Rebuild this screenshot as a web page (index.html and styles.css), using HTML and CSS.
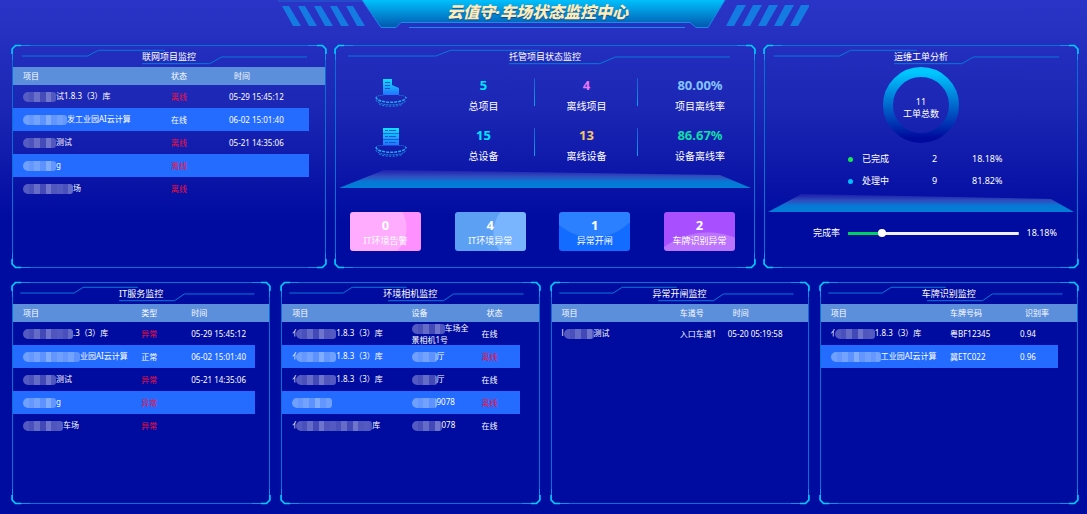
FILE: index.html
```html
<!DOCTYPE html>
<html lang="zh-CN">
<head>
  <meta charset="UTF-8">
  <meta name="viewport" content="width=device-width, initial-scale=1.0">
  <title>云值守·车场状态监控中心</title>
  <link rel="stylesheet" href="styles.css">
</head>
<body>
  <!-- shared shapes -->
  <svg class="defs" aria-hidden="true">
    <defs>
      <linearGradient id="banner-fill" x1="0" y1="0" x2="0" y2="1">
        <stop offset="0" stop-color="#00c0fc"/>
        <stop offset="1" stop-color="#0358b0"/>
      </linearGradient>
      <linearGradient id="platform-fill" x1="0" y1="0" x2="0" y2="1">
        <stop offset="0" stop-color="#5a50c8" stop-opacity="0.2"/>
        <stop offset="0.35" stop-color="#3f66c8" stop-opacity="0.7"/>
        <stop offset="0.65" stop-color="#0678d6"/>
        <stop offset="1" stop-color="#007fd8"/>
      </linearGradient>
      <linearGradient id="icon-fill" x1="0" y1="0" x2="0" y2="1">
        <stop offset="0" stop-color="#10e0ff"/>
        <stop offset="1" stop-color="#2272ff"/>
      </linearGradient>
      <linearGradient id="ring-fill" x1="0" y1="0" x2="0" y2="1">
        <stop offset="0" stop-color="#00c8ff"/>
        <stop offset="1" stop-color="#000a9c"/>
      </linearGradient>
      <symbol id="title-line" viewBox="0 0 314 22" preserveAspectRatio="none">
        <path d="M9 10.500H75L86 4.500H153M130 18.500H198L210 11.500H296" fill="none" stroke="#0878d8" vector-effect="non-scaling-stroke"/>
      </symbol>
      <symbol id="corner" viewBox="0 0 20 16">
        <path d="M2.500 16V5L6 1.500H20" fill="none" stroke="#0e8ee4"/>
        <path d="M2 10V5L5.500 1.500H11" fill="none" stroke="#00ccff" stroke-width="1.500"/>
      </symbol>
      <symbol id="base" viewBox="0 0 32 12">
        <g fill="none" stroke="#1c8fe8">
          <path d="M1 2C1 9 31 9 31 2" stroke="#22a8ee" stroke-width="1.500" stroke-dasharray="3 1"/>
          <path d="M1 5C2 11.500 30 11.500 31 5" stroke-dasharray="2 1"/>
          <path d="M4 9C8 12 24 12 28 9" stroke-dasharray="2 1.500"/>
          <path d="M1 2Q4 0 8 0.500M31 2Q28 0 24 0.500" stroke-dasharray="1 1"/>
        </g>
      </symbol>
    </defs>
  </svg>

  <header class="header">
    <svg class="banner" viewBox="278 0 531 30" aria-hidden="true">
      <path d="M362 0H725L708 27H696L690 22H401L396 27H381Z" fill="url(#banner-fill)"/>
      <path d="M362 0L381 27.500H396L401 22.500H690L696 27.500H708L725 0M409 27.500H685" fill="none" stroke="#188ce8"/>
      <path d="M278 1H362" stroke="#2060d0"/>
      <g fill="#147be2">
        <path d="M282 6h7l12 20h-8zM298 6h7l12 20h-8zM314 6h7l12 20h-8zM330 6h7l12 20h-8zM346 6h7l12 20h-8z"/>
        <path d="M737 5h9l-12 21h-8zM753 5h9l-12 21h-8zM769 5h9l-12 21h-8zM785 5h9l-12 21h-8zM801 5h9l-12 21h-8z"/>
      </g>
    </svg>
    <h1>云值守·车场状态监控中心</h1>
  </header>

  <main class="main">
    <div class="row row-top">
      <section class="panel">
        <svg class="corner tl"><use href="#corner"/></svg><svg class="corner tr"><use href="#corner"/></svg>
        <svg class="corner bl"><use href="#corner"/></svg><svg class="corner br"><use href="#corner"/></svg>
        <div class="title"><svg class="title-bg"><use href="#title-line"/></svg><h2>联网项目监控</h2></div>
        <table>
          <colgroup><col><col class="c58"><col class="c80"><col class="gutter-m"></colgroup>
          <thead><tr><th>项目</th><th>状态</th><th class="inset">时间</th><th></th></tr></thead>
          <tbody>
            <tr><td><span class="mask w33"></span>试1.8.3（3）库</td><td class="bad">离线</td><td>05-29 15:45:12</td></tr>
            <tr><td><span class="mask w44"></span>发工业园AI云计算</td><td>在线</td><td>06-02 15:01:40</td></tr>
            <tr><td><span class="mask w33"></span>测试</td><td class="bad">离线</td><td>05-21 14:35:06</td></tr>
            <tr><td><span class="mask w33"></span>g</td><td class="bad">离线</td><td></td></tr>
            <tr><td><span class="mask w50"></span>场</td><td class="bad">离线</td><td></td></tr>
          </tbody>
        </table>
      </section>

      <section class="panel">
        <svg class="corner tl"><use href="#corner"/></svg><svg class="corner tr"><use href="#corner"/></svg>
        <svg class="corner bl"><use href="#corner"/></svg><svg class="corner br"><use href="#corner"/></svg>
        <div class="title"><svg class="title-bg"><use href="#title-line"/></svg><h2>托管项目状态监控</h2></div>
        <div class="stats">
          <div class="stat-icon">
            <svg width="32" height="30" viewBox="0 0 32 30">
              <use href="#base" y="17" width="32" height="12"/>
              <path d="M8 1H17V7L24 10V17H8Z" fill="url(#icon-fill)"/>
              <path d="M10 4.500h5M10 7.500h5M10 10.500h5" stroke="#1458c8"/>
            </svg>
          </div>
          <div class="stat line"><strong class="cyan">5</strong><span>总项目</span></div>
          <div class="stat line"><strong class="pink">4</strong><span>离线项目</span></div>
          <div class="stat last"><strong class="sky">80.00%</strong><span>项目离线率</span></div>
          <div class="stat-icon">
            <svg width="32" height="30" viewBox="0 0 32 30">
              <use href="#base" y="17" width="32" height="12"/>
              <path d="M8 0H24V5.500H8ZM8 6H24V11.500H8ZM8 12H24V17.500H8Z" fill="url(#icon-fill)"/>
              <path d="M10 2.500h3M14 2.500h7M10 8.500h3M14 8.500h7M10 14.500h3M14 14.500h7" stroke="#1458d0"/>
            </svg>
          </div>
          <div class="stat line"><strong class="cyan">15</strong><span>总设备</span></div>
          <div class="stat line"><strong class="gold">13</strong><span>离线设备</span></div>
          <div class="stat last"><strong class="green">86.67%</strong><span>设备离线率</span></div>
        </div>
        <svg class="platform" viewBox="0 0 411 18" preserveAspectRatio="none"><path d="M0 18L45 0L380 5L411 18Z" fill="url(#platform-fill)"/></svg>
        <div class="cards">
          <div class="card card-pink"><strong>0</strong><span>IT环境告警</span></div>
          <div class="card card-sky"><strong>4</strong><span>IT环境异常</span></div>
          <div class="card card-blue"><strong>1</strong><span>异常开闸</span></div>
          <div class="card card-purple"><strong>2</strong><span>车牌识别异常</span></div>
        </div>
      </section>

      <section class="panel">
        <svg class="corner tl"><use href="#corner"/></svg><svg class="corner tr"><use href="#corner"/></svg>
        <svg class="corner bl"><use href="#corner"/></svg><svg class="corner br"><use href="#corner"/></svg>
        <div class="title"><svg class="title-bg"><use href="#title-line"/></svg><h2>运维工单分析</h2></div>
        <div class="ring">
          <svg width="76" height="76" viewBox="0 0 76 76"><circle cx="38" cy="38" r="33" fill="none" stroke="url(#ring-fill)" stroke-width="10"/></svg>
          <p>11<br>工单总数</p>
        </div>
        <ul class="legend">
          <li><i class="dot dot-green"></i><span>已完成</span><span>2</span><span>18.18%</span></li>
          <li><i class="dot dot-cyan"></i><span>处理中</span><span>9</span><span>81.82%</span></li>
        </ul>
        <svg class="platform" viewBox="0 0 411 18" preserveAspectRatio="none"><path d="M0 18L45 0L380 5L411 18Z" fill="url(#platform-fill)"/></svg>
        <div class="rate">
          <label for="rate">完成率</label>
          <input type="range" id="rate" min="0" max="100" step="0.01" value="18.18">
          <output for="rate">18.18%</output>
        </div>
      </section>
    </div>

    <div class="row row-bottom">
      <section class="panel">
        <svg class="corner tl"><use href="#corner"/></svg><svg class="corner tr"><use href="#corner"/></svg>
        <svg class="corner bl"><use href="#corner"/></svg><svg class="corner br"><use href="#corner"/></svg>
        <div class="title"><svg class="title-bg"><use href="#title-line"/></svg><h2>IT服务监控</h2></div>
        <table>
          <colgroup><col><col class="c50"><col class="c64"><col class="gutter-s"></colgroup>
          <thead><tr><th>项目</th><th>类型</th><th>时间</th><th></th></tr></thead>
          <tbody>
            <tr><td><span class="mask w50"></span>.3（3）库</td><td class="bad">异常</td><td>05-29 15:45:12</td></tr>
            <tr><td><span class="mask w57"></span>业园AI云计算</td><td>正常</td><td>06-02 15:01:40</td></tr>
            <tr><td><span class="mask w33"></span>测试</td><td class="bad">异常</td><td>05-21 14:35:06</td></tr>
            <tr><td><span class="mask w33"></span>g</td><td class="bad">异常</td><td></td></tr>
            <tr><td><span class="mask w40"></span>车场</td><td class="bad">异常</td><td></td></tr>
          </tbody>
        </table>
      </section>

      <section class="panel">
        <svg class="corner tl"><use href="#corner"/></svg><svg class="corner tr"><use href="#corner"/></svg>
        <svg class="corner bl"><use href="#corner"/></svg><svg class="corner br"><use href="#corner"/></svg>
        <div class="title"><svg class="title-bg"><use href="#title-line"/></svg><h2>环境相机监控</h2></div>
        <table>
          <colgroup><col><col class="c70"><col class="c38"><col class="gutter"></colgroup>
          <thead><tr><th>项目</th><th>设备</th><th class="inset">状态</th><th></th></tr></thead>
          <tbody>
            <tr><td>亻<span class="mask over w40"></span>1.8.3（3）库</td><td class="two-line"><span class="mask w33"></span>车场全<br>景相机1号</td><td>在线</td></tr>
            <tr><td>亻<span class="mask over w40"></span>1.8.3（3）库</td><td><span class="mask w25"></span>厅</td><td class="bad">离线</td></tr>
            <tr><td>亻<span class="mask over w40"></span>1.8.3（3）库</td><td><span class="mask w25"></span>厅</td><td>在线</td></tr>
            <tr><td><span class="mask w40"></span></td><td><span class="mask w25"></span>9078</td><td class="bad">离线</td></tr>
            <tr><td>亻<span class="mask over w76"></span>库</td><td><span class="mask w30"></span>078</td><td>在线</td></tr>
          </tbody>
        </table>
      </section>

      <section class="panel">
        <svg class="corner tl"><use href="#corner"/></svg><svg class="corner tr"><use href="#corner"/></svg>
        <svg class="corner bl"><use href="#corner"/></svg><svg class="corner br"><use href="#corner"/></svg>
        <div class="title"><svg class="title-bg"><use href="#title-line"/></svg><h2>异常开闸监控</h2></div>
        <table>
          <colgroup><col><col class="c48"><col class="c80"></colgroup>
          <thead><tr><th>项目</th><th>车道号</th><th class="inset">时间</th></tr></thead>
          <tbody>
            <tr><td>l<span class="mask w30"></span>测试</td><td>入口车道1</td><td>05-20 05:19:58</td></tr>
          </tbody>
        </table>
      </section>

      <section class="panel">
        <svg class="corner tl"><use href="#corner"/></svg><svg class="corner tr"><use href="#corner"/></svg>
        <svg class="corner bl"><use href="#corner"/></svg><svg class="corner br"><use href="#corner"/></svg>
        <div class="title"><svg class="title-bg"><use href="#title-line"/></svg><h2>车牌识别监控</h2></div>
        <table>
          <colgroup><col><col class="c70"><col class="c38"><col class="gutter"></colgroup>
          <thead><tr><th>项目</th><th>车牌号码</th><th class="inset">识别率</th><th></th></tr></thead>
          <tbody>
            <tr><td>亻<span class="mask over w40"></span>1.8.3（3）库</td><td>粤BF12345</td><td>0.94</td></tr>
            <tr><td><span class="mask w50"></span>工业园AI云计算</td><td>冀ETC022</td><td>0.96</td></tr>
          </tbody>
        </table>
      </section>
    </div>
  </main>
</body>
</html>
```

FILE: styles.css
```css
* {
  box-sizing: border-box;
}

body {
  display: flex;
  flex-direction: column;
  min-height: 100vh;
  margin: 0;
  color: #fff;
  font-family: "Noto Sans", "Noto Sans CJK SC", sans-serif;
  font-size: 9px;
  background: #000ba0 linear-gradient(#2a34c6, #1c26b4 110px, #000ba0 220px) no-repeat;
}

h1, h2, p, ul {
  margin: 0;
  padding: 0;
}

.defs {
  position: absolute;
  width: 0;
  height: 0;
}

.header {
  display: grid;
  justify-items: center;
  height: 45px;
}

.header > * {
  grid-area: 1 / 1;
}

.banner {
  width: 531px;
  height: 30px;
}

.header h1 {
  z-index: 1;
  padding-right: 12px;
  color: #ffecb8;
  font-size: 16px;
  font-weight: 900;
  font-style: italic;
  line-height: 24px;
  text-shadow: 0 1px 1px #0a4a90;
}

.main {
  display: flex;
  flex: 1;
  flex-direction: column;
  gap: 14px;
  padding: 0 9px 10px 12px;
}

.row {
  display: grid;
}

.row-top {
  grid-template-columns: 314fr 420fr 314fr;
  gap: 9px;
}

.row-bottom {
  flex: 1;
  grid-template-columns: repeat(4, 1fr);
  gap: 11px;
}

.panel {
  position: relative;
  min-width: 0;
  border: 1px solid #0670d4;
  border-radius: 5px;
}

.corner {
  position: absolute;
  width: 20px;
  height: 16px;
}

.tl { top: -2px; left: -3px; }
.tr { top: -2px; right: -3px; transform: scaleX(-1); }
.bl { bottom: -2px; left: -3px; transform: scaleY(-1); }
.br { right: -3px; bottom: -2px; transform: scale(-1, -1); }

.title {
  display: grid;
  height: 21px;
}

.title > * {
  grid-area: 1 / 1;
}

.title-bg {
  width: 100%;
  height: 21px;
}

.title h2 {
  font-size: 9px;
  font-weight: 400;
  line-height: 21px;
  text-align: center;
}

/* tables */
table {
  width: 100%;
  border-collapse: collapse;
  table-layout: fixed;
  font-size: 8px;
  line-height: 10px;
}

th {
  height: 18px;
  padding: 0;
  font-weight: 400;
  text-align: left;
  background: #5b8edb;
}

td {
  height: 23px;
  padding: 0;
  white-space: nowrap;
}

th:first-child,
td:first-child {
  padding-left: 10px;
}

th.inset {
  padding-left: 5px;
}

tbody tr:nth-child(even) td {
  background: #246bff;
}

td.bad {
  color: #f0103c;
}

td.two-line {
  line-height: 11px;
}

.c38 { width: 38px; }
.c48 { width: 48px; }
.c50 { width: 50px; }
.c58 { width: 58px; }
.c64 { width: 64px; }
.c70 { width: 70px; }
.c80 { width: 80px; }
.gutter { width: 19px; }
.gutter-m { width: 16px; }
.gutter-s { width: 14px; }

/* hidden part of a name */
.mask {
  display: inline-block;
  height: 10px;
  border-radius: 5px 3px 3px 5px;
  vertical-align: middle;
  background: repeating-linear-gradient(90deg, #5c62c4 0 6px, #5258be 6px 11px, #7076cc 11px 17px, #4a50ba 17px 23px, #7a80d0 23px 28px, #585ec0 28px 34px);
  opacity: 0.9;
}

tr:nth-child(even) .mask {
  background: repeating-linear-gradient(90deg, #78a6ff 0 6px, #6c9cff 6px 11px, #7ca8ff 11px 17px, #6496ff 17px 23px, #8ab4ff 23px 28px, #6a9aff 28px 34px);
}

.over {
  position: relative;
  margin-left: -4px;
}

.w25 { width: 25px; }
.w30 { width: 30px; }
.w33 { width: 33px; }
.w40 { width: 40px; }
.w44 { width: 44px; }
.w50 { width: 50px; }
.w57 { width: 57px; }
.w76 { width: 76px; }

/* project and device totals */
.stats {
  display: grid;
  grid-template-columns: 96fr 103fr 103fr 116fr;
  grid-auto-rows: 50px;
  padding-top: 9px;
}

.stat-icon {
  padding: 2px 0 0 14px;
  text-align: center;
}

.stat {
  display: flex;
  flex-direction: column;
  gap: 4px;
  text-align: center;
}

.stat.line {
  background: linear-gradient(#1c5cd0, #10a0e8) right 2px / 1px 28px no-repeat;
}

.stat.last {
  padding-left: 8px;
}

.stat strong {
  font-size: 13px;
  line-height: 18px;
}

.stat span {
  font-size: 10px;
  line-height: 16px;
}

.cyan { color: #00e4ff; }
.pink { color: #e878f8; }
.sky { color: #84c4ff; }
.gold { color: #f4c468; }
.green { color: #10dca8; }

.platform {
  display: block;
  width: calc(100% - 6px);
  height: 18px;
  margin: 0 3px;
}

.stats + .platform {
  margin-top: -6px;
}

.cards {
  display: flex;
  justify-content: space-between;
  padding: 24px 19px 16px 14px;
}

.card {
  display: flex;
  flex-direction: column;
  width: 71px;
  height: 39px;
  padding-top: 6px;
  border-radius: 3px;
  text-align: center;
}

.card strong {
  font-size: 13px;
  line-height: 15px;
}

.card span {
  font-size: 9px;
  line-height: 16px;
}

.card-pink { background: radial-gradient(circle at 24px 16px, #ffacff 32px, #ff90ff 33px); }
.card-sky { background: radial-gradient(circle at 70px 20px, #78b4ff 31px, #5ca0f4 32px); }
.card-blue { background: radial-gradient(circle at 34px -26px, #2a80ff 51px, #126cff 52px); }
.card-purple { background: radial-gradient(circle at 44px 94px, #bc74ff 73px, #a850ff 74px); }

/* work orders */
.ring {
  display: grid;
  place-items: center;
}

.ring > * {
  grid-area: 1 / 1;
}

.ring svg {
  display: block;
}

.ring p {
  padding-top: 5px;
  line-height: 12px;
  text-align: center;
}

.legend {
  display: grid;
  padding: 5px 0 2px 83px;
  list-style: none;
}

.legend li {
  display: grid;
  grid-template-columns: 14px 70px 40px auto;
  align-items: center;
  line-height: 22px;
}

.dot {
  width: 5px;
  height: 5px;
  border-radius: 50%;
}

.dot-green { background: #18e850; }
.dot-cyan { background: #00c0ff; }

.rate {
  display: flex;
  align-items: center;
  gap: 8px;
  padding: 13px 20px 0 48px;
  line-height: 16px;
}

.rate input {
  flex: 1;
  min-width: 0;
  height: 8px;
  margin: 0;
  appearance: none;
  background: linear-gradient(90deg, #00d060 19%, #f0f0f8 19%) center / 100% 3px no-repeat;
}

.rate input::-webkit-slider-thumb {
  width: 8px;
  height: 8px;
  border-radius: 50%;
  background: #fff;
  appearance: none;
}
```
